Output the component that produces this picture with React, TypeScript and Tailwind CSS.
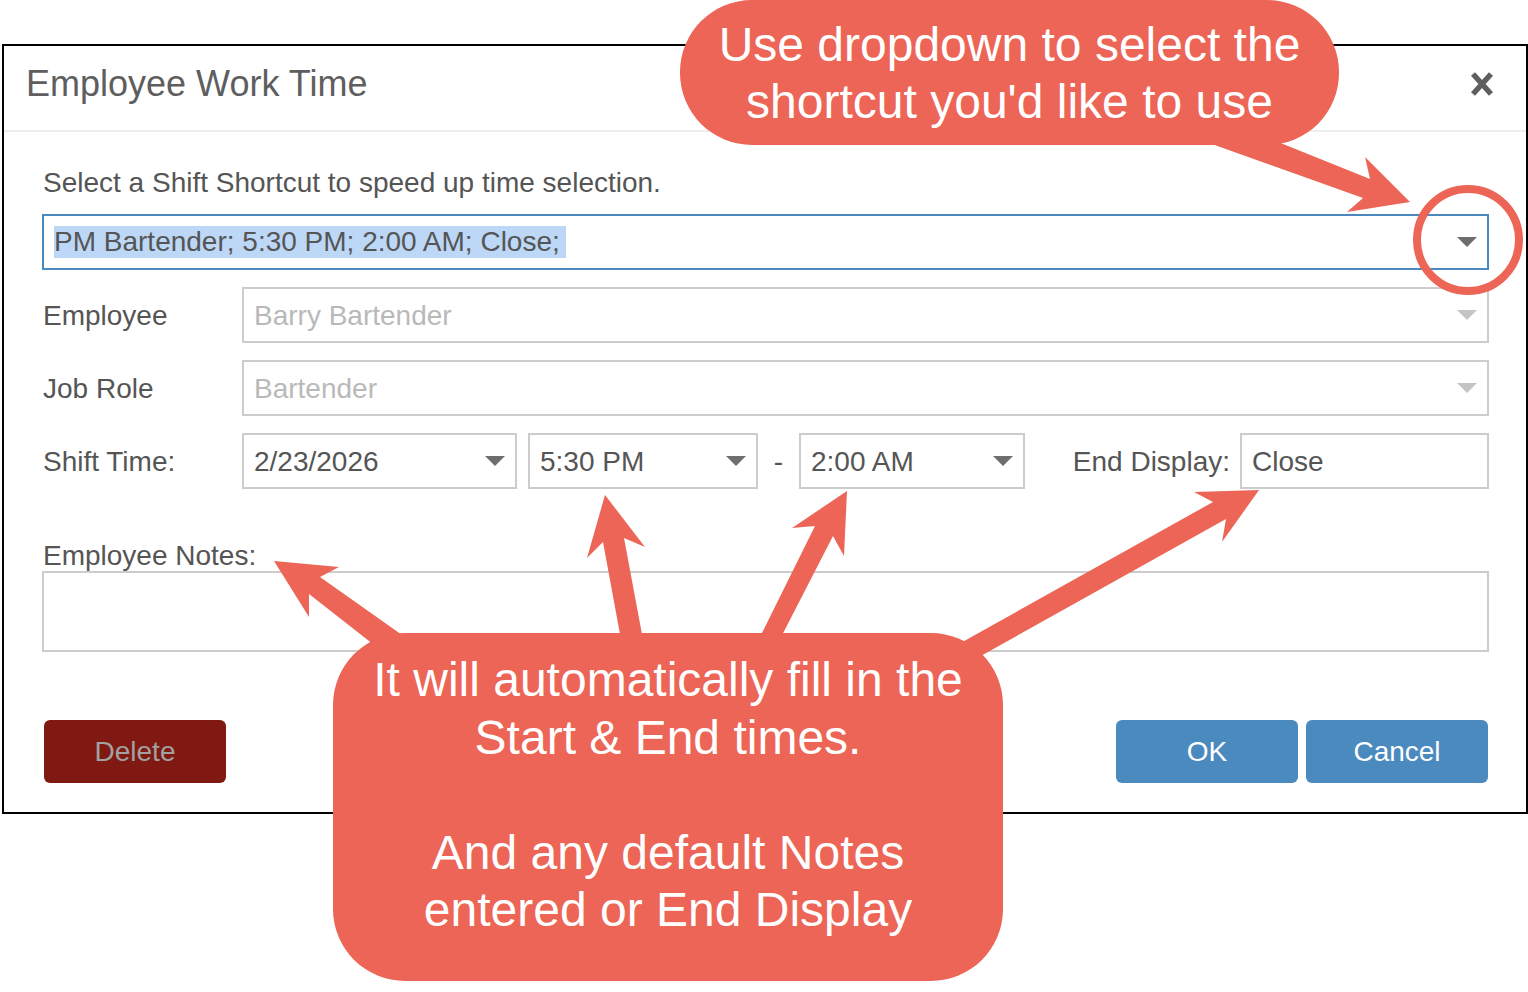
import React from "react";

const CORAL = "#ec6556";

function Caret({ light }: { light?: boolean }) {
  return (
    <svg width="20" height="10" viewBox="0 0 20 10" className="shrink-0">
      <polygon points="0,0 20,0 10,10" fill={light ? "#c4c4c4" : "#6e6e6e"} />
    </svg>
  );
}

function SelectBox({
  value,
  width,
  disabled,
}: {
  value: string;
  width?: string;
  disabled?: boolean;
}) {
  return (
    <div
      className={`h-[56px] ${width ?? "flex-1"} border-2 border-[#cccccc] bg-white flex items-center justify-between pl-[10px] pr-[10px]`}
    >
      <span className={disabled ? "text-[#b9b9b9]" : "text-[#555555]"}>{value}</span>
      <Caret light={disabled} />
    </div>
  );
}

function Row({ label, children, mt }: { label: string; children: React.ReactNode; mt: string }) {
  return (
    <div className={`flex items-center ${mt}`}>
      <div className="w-[200px] shrink-0 pl-[1px] text-[#555555]">{label}</div>
      {children}
    </div>
  );
}

function Overlay() {
  return (
    <svg className="absolute left-0 top-0 pointer-events-none" width="1528" height="992">
      {/* arrow to the shortcut dropdown */}
      <polygon
        points="1410,202 1365,157 1370,179 1268,138 1195,138 1363,198 1347,212"
        fill={CORAL}
      />
      <circle cx="1468" cy="240" r="51" fill="none" stroke={CORAL} strokeWidth="8" />
      {/* arrows out of the lower bubble */}
      <polygon points="274,561 339,567 320,577 412,642 378,648 309,594 309,617" fill={CORAL} />
      <polygon points="605,495 645,547 624,538 644,645 622,645 603,542 587,558" fill={CORAL} />
      <polygon points="847,491 844,556 833,536 777,645 756,645 815,526 792,528" fill={CORAL} />
      <polygon points="1259,490 1222,542 1226,519 979,657 957,645 1213,502 1194,492" fill={CORAL} />
    </svg>
  );
}

export default function App() {
  return (
    <div className="relative w-[1528px] h-[992px] bg-white overflow-hidden font-['Liberation_Sans',Arial,Helvetica,sans-serif] text-[28px] leading-[31px]">
      <div className="ml-[2px] mt-[44px] w-[1526px] border-2 border-black bg-white">
        <div className="h-[86px] border-b-2 border-[#eeeeee] flex items-start justify-between pl-[22px] pr-[32px]">
          <h1 className="mt-[18px] text-[36px] leading-[40px] text-[#5e5e5e]">Employee Work Time</h1>
          <svg width="24" height="26" viewBox="0 0 24 26" className="mt-[25px]">
            <path d="M3 3 L21 23 M21 3 L3 23" stroke="#5f5f5f" strokeWidth="5.5" strokeLinecap="butt" />
          </svg>
        </div>

        <div className="pl-[38px] pr-[37px] pb-[29px]">
          <p className="mt-[35px] pl-[1px] text-[#555555]">Select a Shift Shortcut to speed up time selection.</p>

          <div className="mt-[16px] h-[56px] border-2 border-[#4a88bd] flex items-center justify-between pl-[10px] pr-[10px]">
            <span className="bg-[#bdd7f7] text-[#555555] pr-[6px] leading-[32px]">
              PM Bartender; 5:30 PM; 2:00 AM; Close;
            </span>
            <Caret />
          </div>

          <Row label="Employee" mt="mt-[17px]">
            <SelectBox value="Barry Bartender" disabled />
          </Row>
          <Row label="Job Role" mt="mt-[17px]">
            <SelectBox value="Bartender" disabled />
          </Row>
          <Row label="Shift Time:" mt="mt-[17px]">
            <SelectBox value="2/23/2026" width="w-[275px]" />
            <div className="ml-[11px]" />
            <SelectBox value="5:30 PM" width="w-[230px]" />
            <div className="w-[41px] text-center text-[#555555]">-</div>
            <SelectBox value="2:00 AM" width="w-[226px]" />
            <div className="flex-1 flex items-center justify-end">
              <span className="text-[#555555]">End Display:</span>
              <div className="ml-[10px] w-[249px] h-[56px] border-2 border-[#cccccc] flex items-center pl-[10px] text-[#555555]">
                Close
              </div>
            </div>
          </Row>

          <p className="mt-[51px] pl-[1px] text-[#555555]">Employee Notes:</p>
          <div className="h-[81px] border-2 border-[#cccccc]" />

          <div className="mt-[68px] flex items-center justify-between pl-[2px] pr-[1px]">
            <button className="w-[182px] h-[63px] rounded-[6px] bg-[#7f1911] text-[#a1a1a1]">Delete</button>
            <div className="flex gap-[8px]">
              <button className="w-[182px] h-[63px] rounded-[6px] bg-[#4a8abe] text-white">OK</button>
              <button className="w-[182px] h-[63px] rounded-[6px] bg-[#4a8abe] text-white">Cancel</button>
            </div>
          </div>
        </div>
      </div>

      <Overlay />

      <div className="absolute left-[680px] top-0 w-[659px] h-[145px] rounded-[72px] bg-[#ec6556] flex flex-col items-center justify-center text-white text-[48px] leading-[57px]">
        <div>Use dropdown to select the</div>
        <div>shortcut you'd like to use</div>
      </div>

      <div className="absolute left-[333px] top-[633px] w-[670px] h-[348px] rounded-[72px] bg-[#ec6556] flex flex-col items-center pt-[18px] text-white text-[48px] leading-[57.5px]">
        <div>It will automatically fill in the</div>
        <div>Start &amp; End times.</div>
        <div className="h-[57.5px]" />
        <div>And any default Notes</div>
        <div>entered or End Display</div>
      </div>
    </div>
  );
}
